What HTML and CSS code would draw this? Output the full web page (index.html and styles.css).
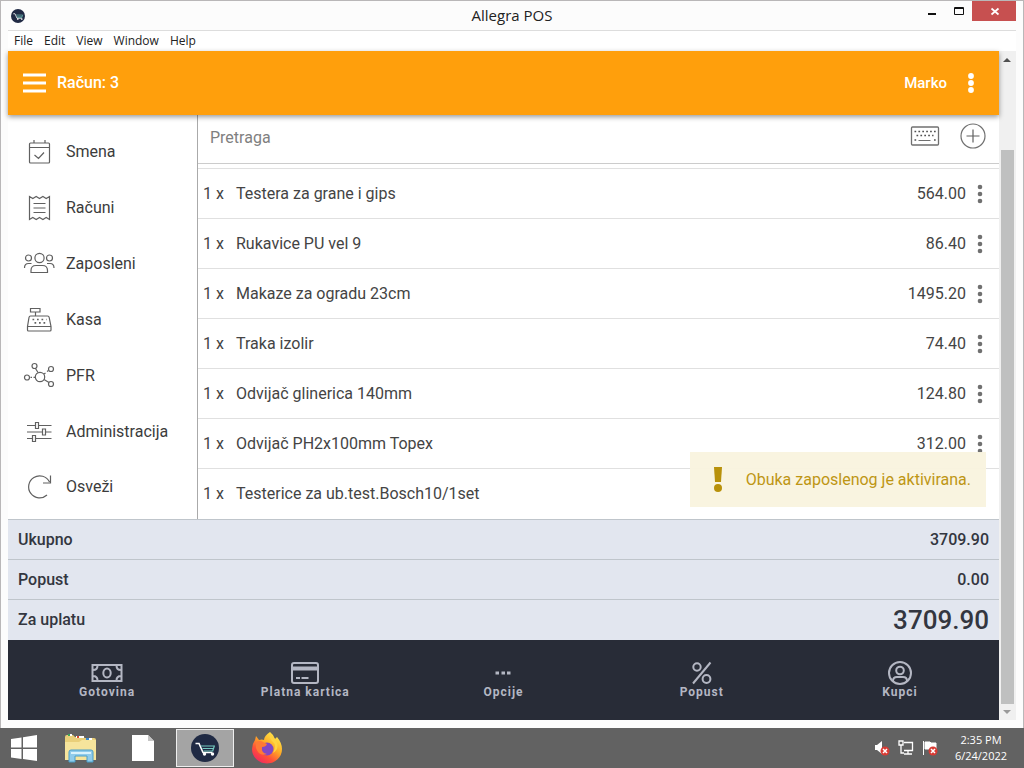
FILE: index.html
```html
<!DOCTYPE html>
<html lang="sr-Latn">
<head>
<meta charset="utf-8">
<meta name="viewport" content="width=device-width, initial-scale=1">
<title>Allegra POS</title>
<link rel="stylesheet" href="styles.css">
</head>
<body>
<svg class="defs" aria-hidden="true">
  <symbol id="dots" viewBox="0 0 6 20"><circle cx="3" cy="3" r="2.300"/><circle cx="3" cy="10" r="2.300"/><circle cx="3" cy="17" r="2.300"/></symbol>
  <symbol id="dots-large" viewBox="0 0 6 20"><circle cx="3" cy="3" r="2.900"/><circle cx="3" cy="10" r="2.900"/><circle cx="3" cy="17" r="2.900"/></symbol>
  <symbol id="cart" viewBox="0 0 28 28"><circle cx="14" cy="14" r="14" fill="#202a44"/><path d="M4.500 9.500h3.500l4 9h9" fill="none" stroke="#fff" stroke-width="1.600"/><path d="M10 12h13M11.500 14.500h11M12.500 17h9M23.500 11.500l-2 6" fill="none" stroke="#74c9bf" stroke-width="1.200"/><circle cx="13.500" cy="20" r="1.700" fill="#fff"/><circle cx="21.500" cy="20" r="1.700" fill="#fff"/></symbol>
</svg>
<div class="window">
  <header class="titlebar">
    <svg class="app-icon" viewBox="0 0 28 28"><use href="#cart"/></svg>
    <h1 class="title">Allegra POS</h1>
    <div class="window-buttons">
      <button class="win-btn" aria-label="Minimize"><svg width="32" height="20" viewBox="0 0 32 20"><path d="M14 13h8" stroke="#111" stroke-width="2"/></svg></button>
      <button class="win-btn win-max" aria-label="Maximize"><svg width="26" height="20" viewBox="0 0 26 20"><path d="M8.500 6.500h9v7h-9zM8 7.500h10" fill="none" stroke="#111"/></svg></button>
      <button class="win-btn win-close" aria-label="Close"><svg width="44" height="20" viewBox="0 0 44 20"><path d="M19.500 7.500l7 6M26.500 7.500l-7 6" stroke="#fff" stroke-width="1.700"/></svg></button>
    </div>
  </header>
  <div class="client">
    <nav class="menubar" aria-label="Window menu">
      <button>File</button><button>Edit</button><button>View</button><button>Window</button><button>Help</button>
    </nav>
    <div class="viewport">
      <div class="app">
        <header class="appbar">
          <button class="plain" aria-label="Meni"><svg width="23" height="20" viewBox="0 0 23 20"><path d="M0 2h23M0 10h23M0 18h23" stroke="#fff" stroke-width="2.800"/></svg></button>
          <strong class="receipt">Račun: 3</strong>
          <strong class="user">Marko</strong>
          <button class="plain more-white" aria-label="Više"><svg width="6" height="20"><use href="#dots-large"/></svg></button>
        </header>
        <div class="main">
          <nav class="sidebar">
            <a href="#"><svg viewBox="0 0 32 32"><path d="M6.500 8q0-1 1-1h18q1 0 1 1v18q0 1-1 1h-18q-1 0-1-1zM6.500 11.500h20M11 4v3M22 4v3M11.500 19l4 3.500 5.500-6"/></svg>Smena</a>
            <a href="#"><svg viewBox="0 0 32 32"><path d="M6.500 4.500l3.300 2 3.400-2 3.300 2 3.400-2 3.300 2 3.300-2v23l-3.300-2-3.300 2-3.400-2-3.300 2-3.400-2-3.300 2zM10.500 11.500h12M10.500 16h12M10.500 20.500h12"/></svg>Računi</a>
            <a href="#"><svg viewBox="0 0 32 32"><circle cx="16.500" cy="10" r="4.600"/><circle cx="5.500" cy="10" r="3"/><circle cx="26.500" cy="10" r="3"/><path d="M8 24.500v-2q0-5 5-5h6.500q5 0 5 5v2zM1.500 20q0-4.500 4-4.500h3M31 20q0-4.500-4-4.500h-3"/></svg>Zaposleni</a>
            <a href="#"><svg viewBox="0 0 32 32"><path d="M7.500 4.500h9.500v3.500h-9.500zM12.500 8v4M7.500 12h17q1.500 0 1.700 1.500l1.800 9v3.500q0 1-1 1h-21.500q-1 0-1-1v-3.500l1.500-9q.200-1.500 1.500-1.500zM4.500 22.500h23.500"/><path stroke-width="1.700" stroke-dasharray="1.700 2.800" d="M9.500 15.500h14M11.500 18.800h11"/></svg>Kasa</a>
            <a href="#"><svg viewBox="0 0 32 32"><circle cx="17" cy="17" r="4.700"/><circle cx="11.500" cy="6" r="2.500"/><circle cx="28" cy="9" r="2.500"/><circle cx="4" cy="17.500" r="2.500"/><circle cx="28" cy="24" r="2.500"/><path d="M12.500 8.500l2.500 4M21 19.500l5 3M21 14l1.500-1M24 11.500l1.500-1M7.500 17.300h1.500M10.500 17.300h1.500"/></svg>PFR</a>
            <a href="#"><svg viewBox="0 0 32 32"><path d="M4 9.500h8.500M15.500 9.500h13M4 16h15.500M23 16h5.500M4 22.500h5.500M12.500 22.500h16"/><path d="M12.500 6.500h3v6h-3zM19.500 13h3v6h-3zM9.500 19.500h3v6h-3z"/></svg>Administracija</a>
            <a href="#"><svg viewBox="0 0 32 32"><path d="M24 24a11 11 0 1 1 2.500-13M27.500 4.500v7.500h-7.500"/></svg>Osveži</a>
          </nav>
          <section class="content">
            <div class="search">
              <input type="text" placeholder="Pretraga" aria-label="Pretraga">
              <button class="plain" aria-label="Tastatura"><svg width="30" height="20" viewBox="0 0 30 20"><rect x="1.500" y="1" width="27" height="18" rx="1" fill="none" stroke="#707070" stroke-width="1.300"/><path d="M4.500 5.500h21.500M6.500 9.500h17M4.500 14h2M24 14h2" fill="none" stroke="#505050" stroke-width="1.500" stroke-dasharray="1.700 2.200"/><path d="M8.500 14.500h12" stroke="#707070"/></svg></button>
              <button class="plain add" aria-label="Dodaj"><svg width="26" height="26" viewBox="0 0 26 26"><path d="M13 6.500v13M6.500 13h13" stroke="#606060" stroke-width="1.200"/><circle cx="13" cy="13" r="12" fill="none" stroke="#707070" stroke-width="1.200"/></svg></button>
            </div>
            <ul class="items">
              <li><span class="qty">1 x</span><span class="name">Testera za grane i gips</span><span>564.00</span><button class="plain more" aria-label="Više"><svg width="6" height="20"><use href="#dots"/></svg></button></li>
              <li><span class="qty">1 x</span><span class="name">Rukavice PU vel 9</span><span>86.40</span><button class="plain more" aria-label="Više"><svg width="6" height="20"><use href="#dots"/></svg></button></li>
              <li><span class="qty">1 x</span><span class="name">Makaze za ogradu 23cm</span><span>1495.20</span><button class="plain more" aria-label="Više"><svg width="6" height="20"><use href="#dots"/></svg></button></li>
              <li><span class="qty">1 x</span><span class="name">Traka izolir</span><span>74.40</span><button class="plain more" aria-label="Više"><svg width="6" height="20"><use href="#dots"/></svg></button></li>
              <li><span class="qty">1 x</span><span class="name">Odvijač glinerica 140mm</span><span>124.80</span><button class="plain more" aria-label="Više"><svg width="6" height="20"><use href="#dots"/></svg></button></li>
              <li><span class="qty">1 x</span><span class="name">Odvijač PH2x100mm Topex</span><span>312.00</span><button class="plain more" aria-label="Više"><svg width="6" height="20"><use href="#dots"/></svg></button></li>
              <li><span class="qty">1 x</span><span class="name">Testerice za ub.test.Bosch10/1set</span></li>
            </ul>
            <div class="toast" role="status"><svg width="8" height="25" viewBox="0 0 8 25"><path d="M0 0h8l-1 15h-6z"/><circle cx="4" cy="21" r="4"/></svg>Obuka zaposlenog je aktivirana.</div>
          </section>
        </div>
        <dl class="totals">
          <div><dt>Ukupno</dt><dd>3709.90</dd></div>
          <div><dt>Popust</dt><dd>0.00</dd></div>
          <div><dt>Za uplatu</dt><dd class="grand">3709.90</dd></div>
        </dl>
        <footer class="actions">
          <button><svg width="32" height="24" viewBox="0 0 32 24"><path d="M1.500 4h29v16h-29zM2 9q4.500 0 4.500-4.500M30 9q-4.500 0-4.500-4.500M2 15q4.500 0 4.500 4.500M30 15q-4.500 0-4.500 4.500"/><ellipse cx="16" cy="12" rx="3.700" ry="4.500"/></svg>Gotovina</button>
          <button><svg width="32" height="24" viewBox="0 0 32 24"><rect x="3" y="2" width="26" height="20" rx="2"/><path d="M3 7.500h26" stroke-width="4"/><path d="M7 17h4M12.500 17h7"/></svg>Platna kartica</button>
          <button><svg width="32" height="24" viewBox="0 0 32 24"><path d="M8.500 12h3.500M14.500 12h3.500M20 12h3.500" stroke-width="3"/></svg>Opcije</button>
          <button><svg width="32" height="24" viewBox="0 0 32 24"><circle cx="11" cy="6" r="3.700"/><circle cx="20.500" cy="18" r="3.900"/><path d="M24.500 1.500l-17.500 21"/></svg>Popust</button>
          <button><svg width="32" height="24" viewBox="0 0 32 24"><circle cx="16" cy="12" r="11"/><circle cx="16" cy="9.500" r="3.800"/><path d="M9 20q0-4 4-4h6q4 0 4 4"/></svg>Kupci</button>
        </footer>
      </div>
      <div class="scrollbar" aria-hidden="true">
        <svg width="16" height="16" viewBox="0 0 16 16"><path d="M4 11l4-4 4 4z" fill="#505050"/></svg>
        <div class="track"><div class="thumb"></div></div>
        <svg width="16" height="16" viewBox="0 0 16 16"><path d="M4 6l4 4 4-4z" fill="#999"/></svg>
      </div>
    </div>
  </div>
</div>
<footer class="taskbar">
  <button class="task" aria-label="Start"><svg width="26" height="26" viewBox="0 0 26 26" fill="#fff"><path d="M0 4l10.500-1.600v10.100H0zM12 2.200L26 0v12.500H12zM0 14h10.500v10L0 22.500zM12 14h14v12l-14-2z"/></svg></button>
  <button class="task" aria-label="File Explorer"><svg width="34" height="30" viewBox="0 0 34 30"><path d="M1 4q0-2 2-2h6l2 2h8l2 1h9q2 0 2 2v20H1z" fill="#e9cf79"/><path d="M4 2h4M12 4h8M22 6h6" stroke="#fff" stroke-width="2"/><path d="M4 2h2" stroke="#3aa559" stroke-width="2"/><path d="M13 4h2" stroke="#d84b30" stroke-width="2"/><path d="M22 6h3" stroke="#3b89cf" stroke-width="2"/><path d="M1 9h14l3-2h14v20H1z" fill="#f6e49c"/><path d="M5 29V19q0-2 2-2h20q2 0 2 2v10h-6v-6H11v6z" fill="#8fcbeb" stroke="#4b9ec8"/><path d="M7 20h20" stroke="#d9f2fc" stroke-width="2"/></svg></button>
  <button class="task" aria-label="Document"><svg width="24" height="28" viewBox="0 0 24 28"><path d="M1 1h16l6 6v20H1z" fill="#fff"/><path d="M17 1v6h6z" fill="#c5c5c5"/></svg></button>
  <button class="task current" aria-label="Allegra POS"><svg width="28" height="28" viewBox="0 0 28 28"><use href="#cart"/></svg></button>
  <button class="task" aria-label="Firefox"><svg width="32" height="32" viewBox="0 0 32 32"><defs><linearGradient id="fire" x1=".85" y1=".05" x2=".2" y2="1"><stop offset="0" stop-color="#fff04d"/><stop offset=".4" stop-color="#ffab26"/><stop offset=".7" stop-color="#ff5038"/><stop offset="1" stop-color="#ed2465"/></linearGradient></defs><path d="M19 0q4 3 5 7l2-2q5 6 5 12a15 14.500 0 0 1-30 0q0-5 3-9l1-4 3 4q3-1 5 0 0-4 6-8z" fill="url(#fire)"/><circle cx="16" cy="17" r="6.500" fill="#8148c5"/><path d="M5 10q4-2 7 0l4 2q-1 3-5 3-1 6 5 7-8 3-11-6z" fill="#ff7936"/><path d="M19 1q-1 6 3 9t0 11q8-5 2-14-4-3-5-6z" fill="#ffd342"/></svg></button>
  <div class="tray">
    <svg width="16" height="16" viewBox="0 0 16 16"><path d="M1 5h2l5-4v13l-5-4H1z" fill="#fff"/><circle cx="11" cy="11" r="4.500" fill="#d83b34"/><path d="M9 9l4 4M13 9l-4 4" stroke="#fff" stroke-width="1.500"/></svg>
    <svg width="16" height="16" viewBox="0 0 16 16" fill="none" stroke="#fff" stroke-width="1.300"><path d="M6 2.500h8.500v8H6M10 10.500v3M6 14h8M1 1v4h4V1zM3 5v8h3"/></svg>
    <svg width="16" height="16" viewBox="0 0 16 16"><path d="M1.500 1v14M3 2h5l1 1h5v7H9L8 9H3z" fill="#fff" stroke="#fff"/><circle cx="11" cy="11" r="4.500" fill="#d83b34"/><path d="M9 9l4 4M13 9l-4 4" stroke="#fff" stroke-width="1.500"/></svg>
  </div>
  <div class="clock"><time>2:35 PM</time><time>6/24/2022</time></div>
</footer>
</body>
</html>
```
FILE: styles.css
```css
* { box-sizing: border-box; }
body { margin: 0; min-height: 100vh; display: flex; flex-direction: column; background: #fcfcfc; color: #444; font: 16px/20px Roboto, sans-serif; }
button { font: inherit; color: inherit; border: 0; padding: 0; margin: 0; background: none; }
svg { display: block; flex: none; }
.defs { position: absolute; width: 0; height: 0; }
.plain { display: flex; }
.window { flex: 1; display: flex; flex-direction: column; padding: 0 7px 8px; border: 1px solid #b9b7b8; border-bottom: 0; }
.titlebar { display: grid; grid-template-columns: 1fr auto 1fr; height: 29px; align-items: center; }
.app-icon { width: 14px; height: 14px; margin-left: 3px; }
.title { margin: 0; padding-bottom: 2px; color: #222; font: 15px/20px "Open Sans", sans-serif; }
.window-buttons { display: flex; align-self: start; justify-content: flex-end; }
.win-btn { display: flex; height: 20px; }
.win-close { background: #c75050; }
.client { flex: 1; display: flex; flex-direction: column; border-top: 1px solid #ddd; }
.menubar { display: flex; gap: 11px; height: 20px; padding-left: 6px; background: #fff; color: #222; font: 12px/20px "Open Sans", sans-serif; }
.viewport { flex: 1; display: flex; }
.app { flex: 1; min-width: 0; display: flex; flex-direction: column; background: #fff; }
.appbar { position: relative; display: flex; align-items: center; height: 64px; padding: 0 25px 0 15px; background: #ff9f0c; color: #fff; box-shadow: 0 2px 5px #0006; }
.receipt, .user { font-weight: 500; }
.receipt { margin-left: 11px; }
.user { margin-left: auto; font-size: 15px; }
.more-white { margin-left: 21px; fill: #fff; }
.main { flex: 1; display: grid; grid-template-columns: 190px 1fr; }
.sidebar { padding-top: 9px; border-right: 1px solid #aaa; }
.sidebar a { display: flex; align-items: center; gap: 11px; height: 56px; padding-left: 15px; color: #3c3c3c; text-decoration: none; }
.sidebar a:last-child { height: 54px; }
.sidebar svg { width: 32px; height: 32px; fill: none; stroke: #606060; stroke-width: 1.2; }
.content { position: relative; display: flex; flex-direction: column; }
.search { display: flex; align-items: center; height: 49px; padding: 0 13px 6px 12px; border-bottom: 1px solid #ccc; }
.search input { flex: 1; min-width: 0; padding: 3px 0 0; border: 0; outline: 0; background: transparent; color: #444; font: inherit; }
.search input::placeholder { color: #808080; opacity: 1; }
.add { margin-left: 20px; }
.items { margin: 4px 0 0; padding: 0; list-style: none; }
.items li { display: flex; align-items: center; height: 50px; padding: 0 16px 0 5px; border-top: 1px solid #e0e0e0; }
.qty { width: 33px; }
.name { flex: 1; }
.more { margin-left: 11px; fill: #707070; }
.toast { position: absolute; right: 13px; bottom: 12px; display: flex; align-items: center; gap: 24px; height: 55px; padding: 0 15px 0 24px; background: #f9f4dff5; color: #be9614; fill: #b8910b; }
.totals { margin: 0; padding-bottom: 1px; background: #e2e6ef; color: #333640; font-weight: 500; }
.totals div { display: flex; justify-content: space-between; align-items: center; height: 40px; padding: 0 10px; border-top: 1px solid #bfc5cb; }
.totals dd { margin: 0; }
.totals .grand { font-size: 26px; }
.actions { display: grid; grid-template-columns: repeat(5, 1fr); height: 80px; background: #282c37; color: #b4b7c3; }
.actions button { display: flex; flex-direction: column; align-items: center; justify-content: center; font-size: 12px; line-height: 14px; font-weight: 700; letter-spacing: 1px; }
.actions svg { fill: none; stroke: #b4b7c3; stroke-width: 2; }
.scrollbar { display: flex; flex-direction: column; width: 17px; background: #f0f0f0; }
.track { flex: 1; display: flex; flex-direction: column; padding-top: 83px; }
.thumb { flex: 1; width: 13px; margin-left: 2px; background: #bfc0c0; }
.taskbar { display: flex; align-items: center; height: 40px; padding-right: 16px; background: #626262; color: #fff; }
.task { display: flex; align-items: center; justify-content: center; width: 58px; height: 38px; }
.task:first-child { width: 48px; }
.task + .task { margin-left: 4px; }
.current { border: 1px solid #eee; background: #a4a4a4; }
.tray { display: flex; gap: 8px; margin-left: auto; }
.clock { display: flex; flex-direction: column; width: 54px; margin-left: 16px; text-align: center; font: 11px/16px "Open Sans", sans-serif; }
```
